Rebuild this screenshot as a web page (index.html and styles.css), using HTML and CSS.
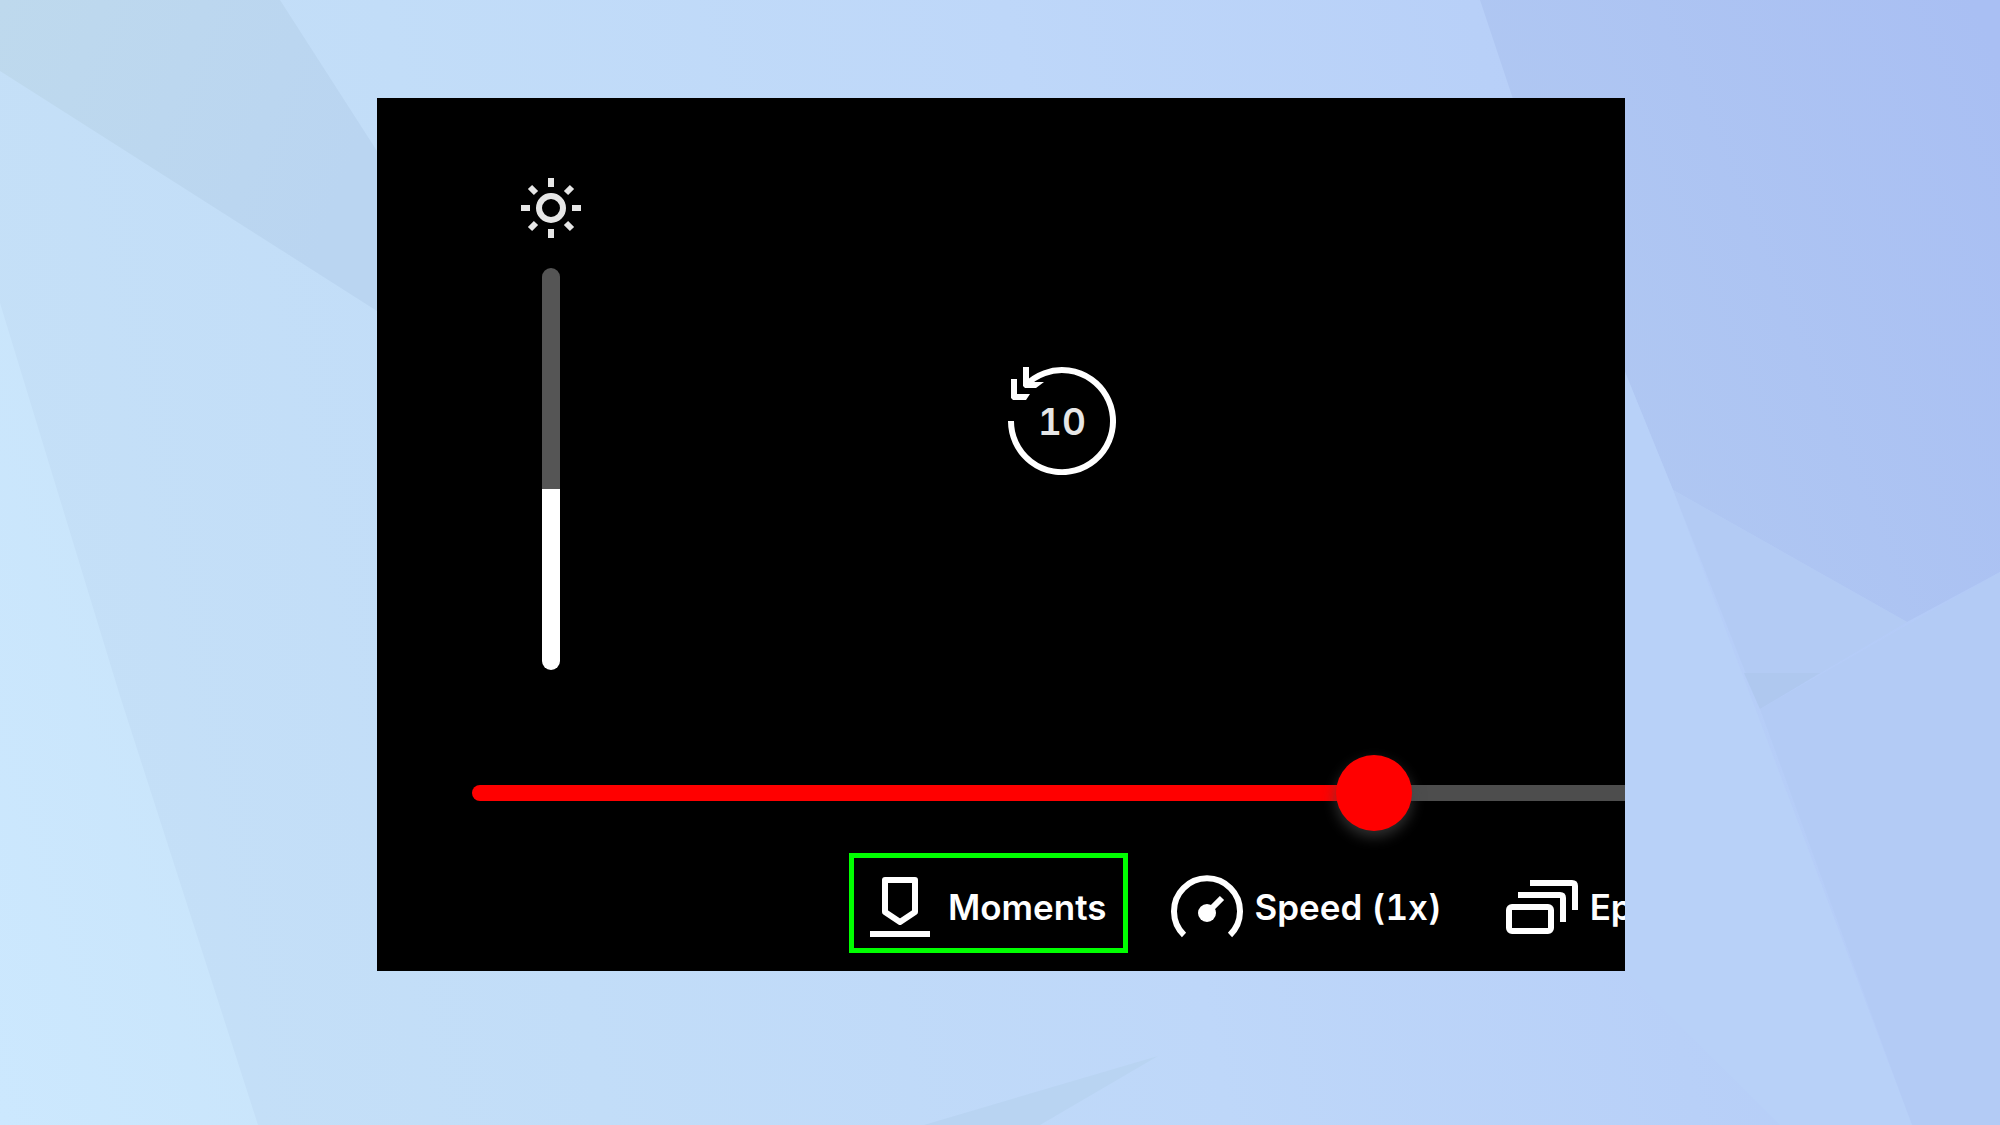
FILE: index.html
```html
<!DOCTYPE html>
<html lang="en">
  <head>
    <meta charset="UTF-8" />
    <title>Player Controls</title>
    <link rel="stylesheet" href="styles.css">
  </head>
  <body>
    <!-- faceted backdrop -->
    <svg class="backdrop" viewBox="0 0 2000 1125" preserveAspectRatio="none" aria-hidden="true">
      <defs>
        <linearGradient id="sky" gradientUnits="userSpaceOnUse" x1="0" y1="700" x2="2000" y2="300">
          <stop offset="0" stop-color="#c5e0f7" />
          <stop offset="0.25" stop-color="#c2ddf8" />
          <stop offset="0.55" stop-color="#bed7f9" />
          <stop offset="1" stop-color="#b2c9f7" />
        </linearGradient>
        <linearGradient id="shade" x1="0" y1="0" x2="1" y2="0.3">
          <stop offset="0" stop-color="#bed9ed" />
          <stop offset="1" stop-color="#bad5f1" />
        </linearGradient>
        <linearGradient id="corner" x1="0" y1="0.6" x2="1" y2="0.1">
          <stop offset="0" stop-color="#b1c9f2" />
          <stop offset="1" stop-color="#a9bff3" />
        </linearGradient>
        <linearGradient id="glow" x1="1" y1="0" x2="0" y2="1">
          <stop offset="0" stop-color="#c8e3f9" />
          <stop offset="1" stop-color="#cce8fe" />
        </linearGradient>
      </defs>
      <rect width="2000" height="1125" fill="url(#sky)" />
      <polygon points="0,0 280,0 377,151 377,311 0,71" fill="url(#shade)" />
      <polygon points="0,303 120,696 258,1125 0,1125" fill="url(#glow)" />
      <polygon points="1480,0 2000,0 2000,572 1907,622 1673,490 1625,372 1530,150" fill="url(#corner)" />
      <polygon points="1673,490 1907,622 1760,709" fill="#b3cbf4" />
      <polygon points="1744,673 1820,673 1760,709" fill="#afc8ef" />
      <polygon points="1760,709 2000,572 2000,1125 1912,1125" fill="#b3cbf5" />
      <polygon points="1600,350 1625,372 1673,490 1912,1125 1780,1125 1625,970" fill="#b8d1f8" />
      <polygon points="924,1125 1158,1056 1040,1125" fill="#b9d4f2" />
    </svg>

    <main class="player">
      <div class="stage">
        <div class="brightness">
          <svg width="60" height="60" viewBox="0 0 60 60" fill="none" stroke="#e6e6e6" stroke-width="6" aria-hidden="true">
            <circle cx="30" cy="30" r="12" />
            <path d="M30 0v9M30 51v9M0 30h9M51 30h9" />
            <path d="M9 9l6 6M45 45l6 6M9 51l6-6M45 15l6-6" />
          </svg>
          <input class="brightness-slider" type="range" min="0" max="100" value="45" aria-label="Brightness" />
        </div>

        <button class="replay" aria-label="Back 10 seconds">
          <svg class="replay-icon" width="108" height="108" viewBox="0 0 108 108" aria-hidden="true">
            <path d="M3 54A51 51 0 1 0 18 18" fill="none" stroke="#fff" stroke-width="6" />
            <path d="M15 0h6v12l3 3h12l-8 6H17l-2-2z" fill="#fff" />
            <path d="M3 12h6v15h13l-4 6H5l-2-2z" fill="#fff" />
          </svg>
          <span>10</span>
        </button>
      </div>

      <div class="timeline">
        <input class="timeline-slider" type="range" min="0" max="100" value="76" aria-label="Playback position" />
      </div>

      <div class="controls">
        <button class="control active">
          <svg width="72" height="72" viewBox="0 0 72 72" fill="none" stroke="#fff" stroke-width="6" aria-hidden="true">
            <path d="M21 9h30v32l-15 10-15-10z" stroke-linejoin="round" />
            <path d="M6 63h60" />
          </svg>
          Moments
        </button>
        <button class="control">
          <svg width="72" height="72" viewBox="0 0 72 72" fill="none" stroke="#fff" stroke-width="6" aria-hidden="true">
            <path d="M13 64A33 33 0 1 1 59 64" />
            <circle cx="36" cy="42" r="9" fill="#fff" stroke="none" />
            <path d="M36 42l15-15" />
          </svg>
          Speed (1x)
        </button>
        <button class="control">
          <svg width="72" height="72" viewBox="0 0 72 72" fill="none" stroke="#fff" stroke-width="6" aria-hidden="true">
            <rect x="3" y="36" width="42" height="24" rx="3" />
            <path d="M12 24h42q3 0 3 3v24" />
            <path d="M24 12h42q3 0 3 3v24" />
          </svg>
          Episodes
        </button>
      </div>
    </main>
  </body>
</html>
```
FILE: styles.css
```css
* {
  box-sizing: border-box;
}

body {
  margin: 0;
  min-height: 100vh;
  padding: 98px 0 0 2px;
  background: #c0daf8;
  color: white;
  font-family: Inter, sans-serif;
  font-variant-numeric: tabular-nums;
}

.backdrop {
  position: fixed;
  inset: 0;
  width: 100%;
  height: 100%;
  z-index: -1;
}

.player {
  width: 62.4vw;
  margin: 0 auto;
  padding: 80px 0 18px;
  background: black;
  overflow: hidden;
}

button {
  border: none;
  background: none;
  color: inherit;
  font-family: inherit;
  font-variant-numeric: inherit;
  cursor: pointer;
}

input[type="range"] {
  appearance: none;
  margin: 0;
  cursor: pointer;
}

/* brightness + replay */
.stage {
  display: grid;
  grid-template-columns: 487fr 617fr;
  align-items: start;
  padding-left: 144px;
}

.brightness {
  display: flex;
  flex-direction: column;
  align-items: center;
  gap: 30px;
  width: 60px;
}

.brightness-slider {
  writing-mode: vertical-lr;
  direction: rtl;
  width: 18px;
  height: 402px;
  border-radius: 9px;
  background: linear-gradient(to top, white 45%, #555 45%);
}

.brightness-slider::-webkit-slider-thumb {
  appearance: none;
  width: 18px;
  height: 18px;
  background: transparent;
}

.replay {
  display: grid;
  place-items: center;
  width: 108px;
  margin-top: 189px;
  padding: 0;
  color: #e6e6e6;
  font-size: 37px;
  font-weight: 600;
}

.replay > * {
  grid-area: 1 / 1;
}

/* timeline */
.timeline {
  margin: 85px -60px 0 95px;
}

.timeline-slider {
  display: block;
  width: 100%;
  height: 76px;
  background: transparent;
}

.timeline-slider::-webkit-slider-runnable-track {
  height: 16px;
  border-radius: 8px;
  background: linear-gradient(to right, red 75%, #4d4d4d 75%);
}

.timeline-slider::-webkit-slider-thumb {
  appearance: none;
  width: 76px;
  height: 76px;
  margin-top: -30px;
  border-radius: 50%;
  background: red;
  box-shadow: 0 6px 14px rgba(70, 70, 70, 0.7);
}

/* bottom row, runs past the right edge */
.controls {
  display: flex;
  gap: 28px;
  margin-top: 22px;
  padding-left: 472px;
}

.control {
  display: flex;
  flex-shrink: 0;
  align-items: center;
  gap: 12px;
  padding: 13px 16px 5px 10px;
  border: 5px solid transparent;
  font-size: 35px;
  font-weight: 600;
  white-space: nowrap;
}

.control.active {
  border-color: #0f0;
}
```
